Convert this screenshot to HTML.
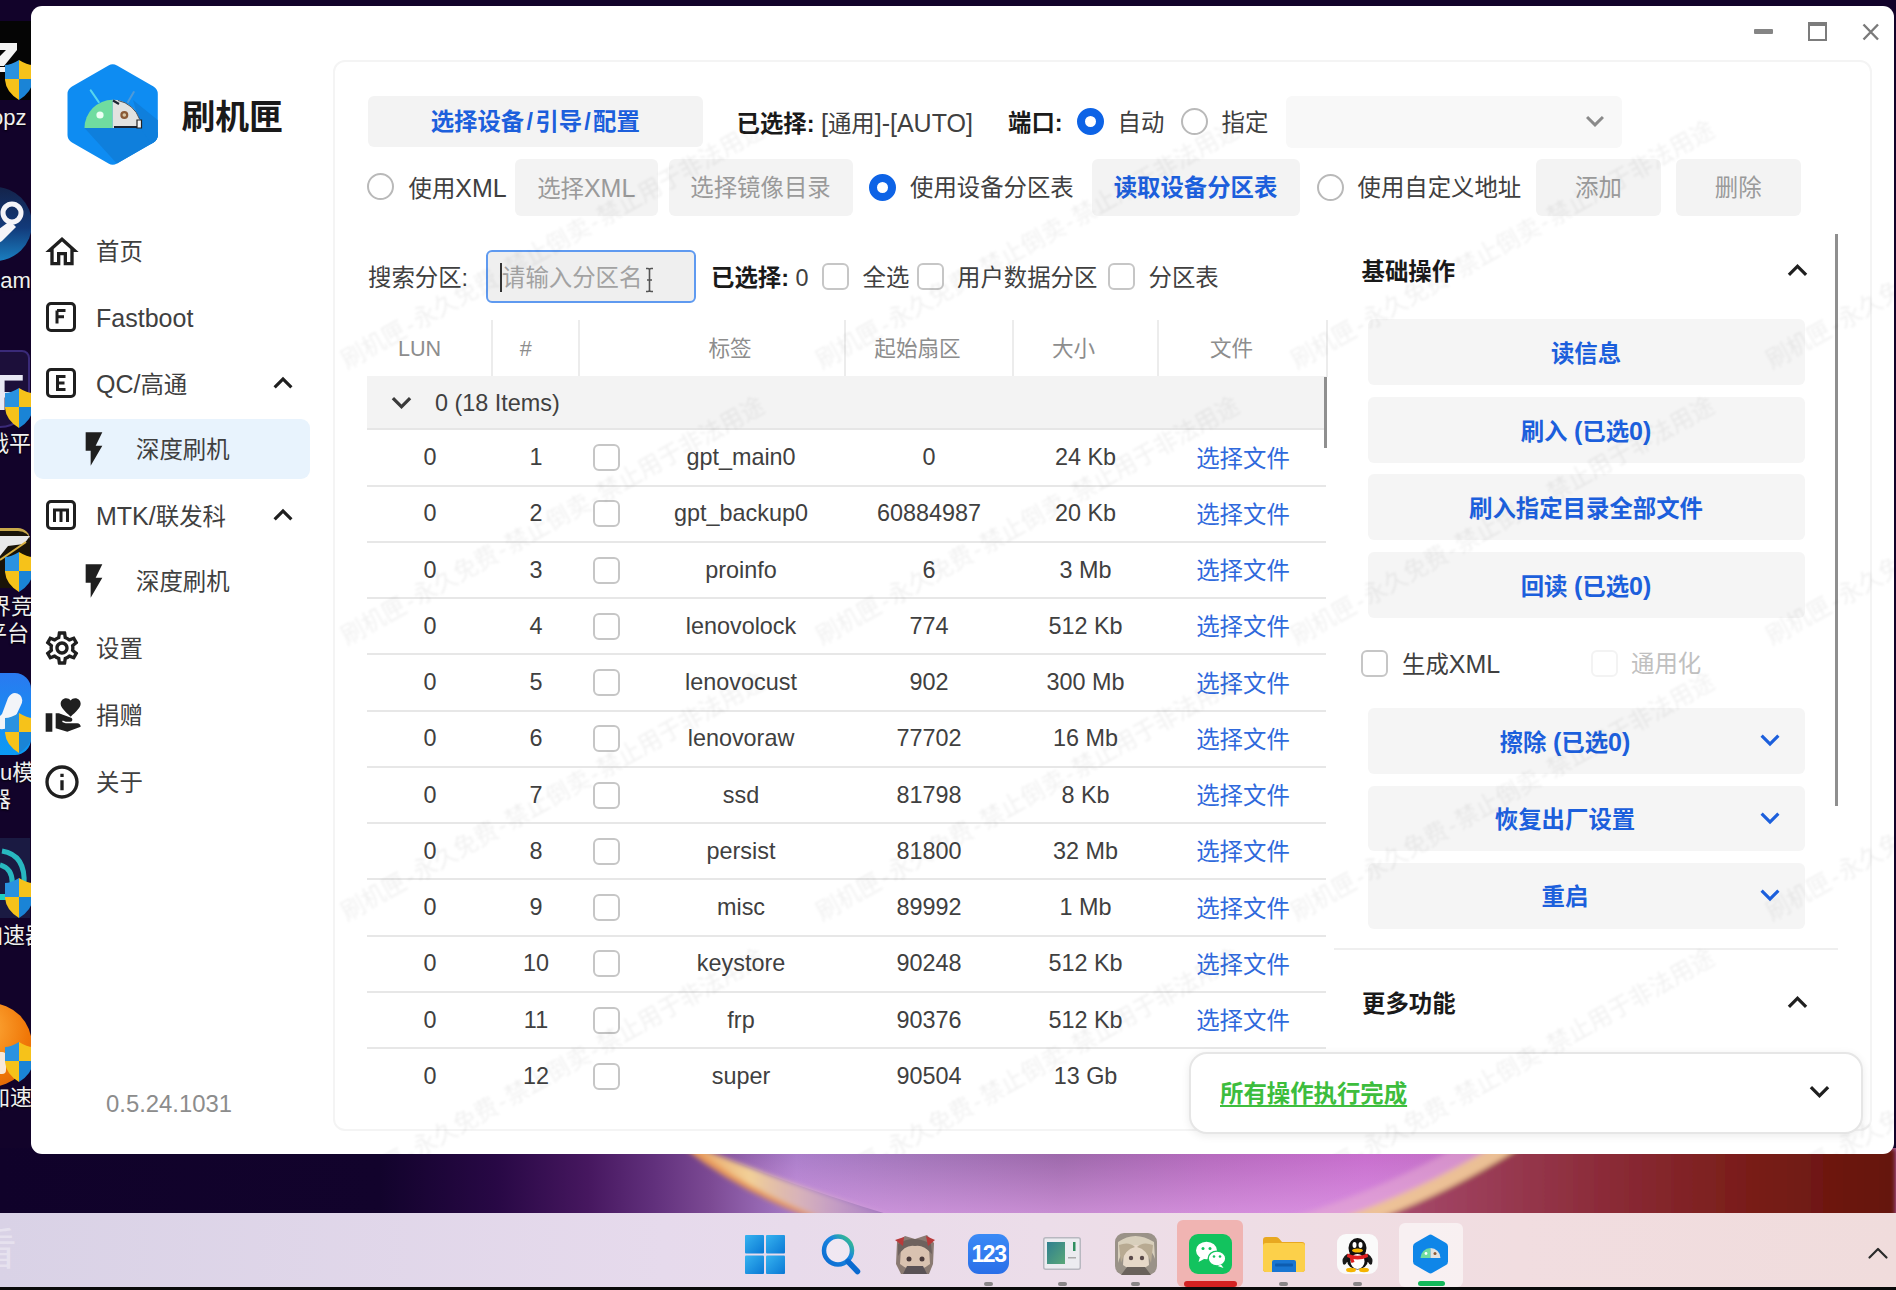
<!DOCTYPE html>
<html lang="zh-CN">
<head>
<meta charset="utf-8">
<title>刷机匣</title>
<style>
*{box-sizing:border-box;margin:0;padding:0}
html,body{width:1896px;height:1290px;overflow:hidden}
body{position:relative;font-family:"Liberation Sans","Noto Sans CJK SC",sans-serif;font-size:23.4px;color:#404040;background:#12032a}
.abs,.t,.tc,.b,.btn{position:absolute}
.t,.tc{white-space:nowrap;height:32px;line-height:32px;padding-top:1px}
.l{font-size:1.07em}
.sl{display:inline-block;width:11px;text-align:center}
.tc{text-align:center}
.b{font-weight:bold}
.btn{background:#f3f3f3;border-radius:6px;text-align:center;white-space:nowrap;padding-top:1.500px}
.blue{color:#1c5fdc}
.gray{color:#9a9a9a}
.dark{color:#1a1a1a}
/* desktop */
#wall{position:absolute;left:0;top:0;width:1896px;height:1290px;overflow:hidden}
#win{position:absolute;left:31px;top:6px;width:1863px;height:1148px;background:#fff;border-radius:11px;overflow:hidden}
#card{position:absolute;left:333px;top:60px;width:1539px;height:1071px;border:2px solid #f4f4f4;border-radius:12px}
.ck{position:absolute;width:27px;height:27px;border:2px solid #c6c6c6;border-radius:6px;background:#fff}
.rd{position:absolute;width:27px;height:27px;border:2px solid #b9b9b9;border-radius:50%;background:#fff}
.rd.on{border:8px solid #0d63e6}
.hl{position:absolute;height:2px;background:#e7e7e7;left:367px;width:959px}
.vl{position:absolute;width:2px;background:#ececec;top:320px;height:57px}
.row{position:absolute;left:0;width:1896px;height:0}
.row .t,.row .tc{top:-17px}
.row .ck{top:-13px;left:592.5px}
.lnk{color:#2f69dc}
#wm{position:absolute;left:31px;top:6px;width:1863px;height:1148px;overflow:hidden;border-radius:11px;pointer-events:none}
#wm i{display:inline-block;width:12px;text-align:center;font-style:normal}
#wm span{position:absolute;white-space:nowrap;font-size:23.400px;color:rgba(0,0,0,0.06);filter:blur(0.900px);transform-origin:0 50%;transform:rotate(-29.200deg);height:30px;line-height:30px}
#task{position:absolute;left:0;top:1213px;width:1896px;height:74px;background:linear-gradient(90deg,#d9d2e6 0%,#e6daec 35%,#ecdde9 55%,#f1dde0 80%,#f0dcdc 100%)}
</style>
</head>
<body>
<div id="wall">
<svg class="abs" style="left:0;top:1148px" width="1896" height="70" viewBox="0 1148 1896 70">
<defs>
<linearGradient id="wl" x1="0" y1="0" x2="1896" y2="0" gradientUnits="userSpaceOnUse">
<stop offset="0" stop-color="#10022a"/><stop offset="0.200" stop-color="#12032c"/><stop offset="0.262" stop-color="#280845"/><stop offset="0.310" stop-color="#46175f"/><stop offset="0.345" stop-color="#61307c"/><stop offset="0.375" stop-color="#7c4a94"/>
<stop offset="0.420" stop-color="#a87cc8"/><stop offset="0.480" stop-color="#a074b8"/><stop offset="0.560" stop-color="#9a66a8"/><stop offset="0.640" stop-color="#b468bc"/><stop offset="0.720" stop-color="#c66ccc"/><stop offset="0.800" stop-color="#c070c0"/><stop offset="1" stop-color="#c070c0"/>
</linearGradient>
<linearGradient id="wr" x1="1380" y1="0" x2="1896" y2="0" gradientUnits="userSpaceOnUse">
<stop offset="0" stop-color="#a84c70"/><stop offset="0.200" stop-color="#9a3c56"/><stop offset="0.450" stop-color="#8a2a36"/><stop offset="0.700" stop-color="#7a1e1a"/><stop offset="1" stop-color="#64140a"/>
</linearGradient>
<linearGradient id="wv" x1="0" y1="1150" x2="0" y2="1216" gradientUnits="userSpaceOnUse"><stop offset="0" stop-color="#e8a8f0" stop-opacity="0"/><stop offset="1" stop-color="#e8a8f0" stop-opacity="0.600"/></linearGradient>
<linearGradient id="wa" x1="0" y1="0" x2="1" y2="0"><stop offset="0" stop-color="#e8a060"/><stop offset="0.300" stop-color="#f2d098"/><stop offset="1" stop-color="#e8c8e8" stop-opacity="0"/></linearGradient>
<filter id="bl" x="-5%" y="-50%" width="110%" height="200%"><feGaussianBlur stdDeviation="2.500"/></filter>
</defs>
<rect x="0" y="1148" width="1896" height="70" fill="url(#wl)"/>
<path d="M700 1148 Q790 1185 900 1218 L1380 1218 L1520 1148Z" fill="url(#wv)"/>
<g filter="url(#bl)">
<path d="M686 1148 Q740 1190 814 1218 L900 1218 Q790 1185 700 1148Z" fill="url(#wa)"/>
<path d="M684 1148 Q740 1192 812 1218 L822 1218 Q748 1190 694 1148Z" fill="#e89858"/>
<path d="M1516 1148 L1896 1148 L1896 1218 L1376 1218 Q1450 1190 1516 1148Z" fill="url(#wr)"/>
<path d="M1490 1148 L1520 1148 Q1450 1192 1380 1218 L1340 1218 Q1420 1190 1490 1148Z" fill="#f0c890" opacity="0.900"/>
<path d="M1455 1148 L1492 1148 Q1420 1190 1342 1218 L1290 1218 Q1380 1190 1455 1148Z" fill="#e8b0d0" opacity="0.500"/>
</g>
</svg>
<div class="abs" style="left:0;top:21px;width:31px;height:79px;background:#050505"></div>
<svg class="abs" style="left:0;top:36px" width="31" height="40" viewBox="0 0 31 40"><path d="M-4 7 L17 7 L17 14 L4 30 L-4 30 L-4 24 L6 14 L-4 14Z M-4 31 h9 v5 h-9z" fill="#f4f4f4"/></svg>
<svg class="abs" style="left:5px;top:60px" width="28" height="40" viewBox="0 0 28 40"><defs><clipPath id="s1"><path d="M14 0 Q22 5 28 5 L28 20 Q27 32 14 40 Q1 32 0 20 L0 5 Q6 5 14 0Z"/></clipPath></defs><g clip-path="url(#s1)"><rect x="0" y="0" width="14" height="19" fill="#2a92e0"/><rect x="14" y="0" width="14" height="19" fill="#f6c21a"/><rect x="0" y="19" width="14" height="21" fill="#f6c21a"/><rect x="14" y="19" width="14" height="21" fill="#1a84d6"/></g></svg>
<div style="position:absolute;white-space:nowrap;color:#f0f0f0;font-size:22px;line-height:26px;height:26px;text-shadow:0 1px 2px #000;left:-9px;top:105px">opz</div>
<div class="abs" style="left:-42px;top:187px;width:74px;height:74px;border-radius:50%;background:linear-gradient(180deg,#14234a 0%,#123a7a 55%,#1a7fc0 100%)"></div>
<svg class="abs" style="left:0;top:195px" width="31" height="60" viewBox="0 0 31 60"><circle cx="12" cy="18" r="9" fill="none" stroke="#f4f4f8" stroke-width="5"/><path d="M-4 36 L10 26 L16 32 L2 46 L-4 50Z" fill="#f4f4f8"/></svg>
<div style="position:absolute;white-space:nowrap;color:#f0f0f0;font-size:22px;line-height:26px;height:26px;text-shadow:0 1px 2px #000;left:-18px;top:268px">team</div>
<div class="abs" style="left:-30px;top:350px;width:60px;height:78px;border-radius:8px 8px 30px 30px;background:#1c0f3a;border:2px solid #3a2a78"></div>
<div class="abs b" style="left:-6px;top:368px;font-size:50px;line-height:50px;color:#e8e8f4">F</div>
<svg class="abs" style="left:5px;top:388px" width="28" height="40" viewBox="0 0 28 40"><defs><clipPath id="s2"><path d="M14 0 Q22 5 28 5 L28 20 Q27 32 14 40 Q1 32 0 20 L0 5 Q6 5 14 0Z"/></clipPath></defs><g clip-path="url(#s2)"><rect x="0" y="0" width="14" height="19" fill="#2a92e0"/><rect x="14" y="0" width="14" height="19" fill="#f6c21a"/><rect x="0" y="19" width="14" height="21" fill="#f6c21a"/><rect x="14" y="19" width="14" height="21" fill="#1a84d6"/></g></svg>
<div style="position:absolute;white-space:nowrap;color:#f0f0f0;font-size:22px;line-height:26px;height:26px;text-shadow:0 1px 2px #000;left:-13px;top:431px">战平</div>
<div class="abs" style="left:-40px;top:528px;width:70px;height:60px;border-radius:12px;background:#1a1408;border-top:3px solid #c8a84a"></div>
<svg class="abs" style="left:0;top:534px" width="31" height="30" viewBox="0 0 31 30"><path d="M0 2 L30 2 L24 10 L8 12 L0 22Z" fill="#e8e8e8"/><path d="M0 26 L26 8" stroke="#d8b040" stroke-width="2"/></svg>
<svg class="abs" style="left:5px;top:552px" width="28" height="40" viewBox="0 0 28 40"><defs><clipPath id="s3"><path d="M14 0 Q22 5 28 5 L28 20 Q27 32 14 40 Q1 32 0 20 L0 5 Q6 5 14 0Z"/></clipPath></defs><g clip-path="url(#s3)"><rect x="0" y="0" width="14" height="19" fill="#2a92e0"/><rect x="14" y="0" width="14" height="19" fill="#f6c21a"/><rect x="0" y="19" width="14" height="21" fill="#f6c21a"/><rect x="14" y="19" width="14" height="21" fill="#1a84d6"/></g></svg>
<div style="position:absolute;white-space:nowrap;color:#f0f0f0;font-size:22px;line-height:26px;height:26px;text-shadow:0 1px 2px #000;left:-11px;top:594px">界竞</div>
<div style="position:absolute;white-space:nowrap;color:#f0f0f0;font-size:22px;line-height:26px;height:26px;text-shadow:0 1px 2px #000;left:-15px;top:621px">平台</div>
<div class="abs" style="left:-50px;top:673px;width:81px;height:82px;border-radius:16px;background:linear-gradient(180deg,#2a7af0,#0a9af4)"></div>
<svg class="abs" style="left:0;top:690px" width="31" height="50" viewBox="0 0 31 50"><path d="M2 24 L8 8 Q13 0 20 5 Q24 9 21 15 L13 32 Q7 42 -4 38 L-4 30Z" fill="#f2f4f8"/></svg>
<svg class="abs" style="left:5px;top:713px" width="28" height="40" viewBox="0 0 28 40"><defs><clipPath id="s4"><path d="M14 0 Q22 5 28 5 L28 20 Q27 32 14 40 Q1 32 0 20 L0 5 Q6 5 14 0Z"/></clipPath></defs><g clip-path="url(#s4)"><rect x="0" y="0" width="14" height="19" fill="#2a92e0"/><rect x="14" y="0" width="14" height="19" fill="#f6c21a"/><rect x="0" y="19" width="14" height="21" fill="#f6c21a"/><rect x="14" y="19" width="14" height="21" fill="#1a84d6"/></g></svg>
<div style="position:absolute;white-space:nowrap;color:#f0f0f0;font-size:22px;line-height:26px;height:26px;text-shadow:0 1px 2px #000;left:0px;top:760px">u模</div>
<div style="position:absolute;white-space:nowrap;color:#f0f0f0;font-size:22px;line-height:26px;height:26px;text-shadow:0 1px 2px #000;left:-11px;top:787px">器</div>
<div class="abs" style="left:-40px;top:838px;width:70px;height:80px;background:#1a1a42"></div>
<svg class="abs" style="left:0;top:845px" width="31" height="70" viewBox="0 0 31 70"><path d="M2 6 Q26 10 24 40" fill="none" stroke="#28b8c0" stroke-width="5"/><path d="M0 20 Q14 24 12 42" fill="none" stroke="#28b8c0" stroke-width="5"/><path d="M0 52 h6" stroke="#20d0c0" stroke-width="6"/></svg>
<svg class="abs" style="left:5px;top:878px" width="28" height="40" viewBox="0 0 28 40"><defs><clipPath id="s5"><path d="M14 0 Q22 5 28 5 L28 20 Q27 32 14 40 Q1 32 0 20 L0 5 Q6 5 14 0Z"/></clipPath></defs><g clip-path="url(#s5)"><rect x="0" y="0" width="14" height="19" fill="#2a92e0"/><rect x="14" y="0" width="14" height="19" fill="#f6c21a"/><rect x="0" y="19" width="14" height="21" fill="#f6c21a"/><rect x="14" y="19" width="14" height="21" fill="#1a84d6"/></g></svg>
<div style="position:absolute;white-space:nowrap;color:#f0f0f0;font-size:22px;line-height:26px;height:26px;text-shadow:0 1px 2px #000;left:-19px;top:923px">加速器</div>
<div class="abs" style="left:-52px;top:1003px;width:84px;height:84px;border-radius:50%;background:radial-gradient(circle at 40% 30%,#ffb040,#f07808 60%,#d85c04)"></div>
<div class="abs" style="left:-20px;top:1052px;width:26px;height:22px;background:#f8e8d8;border-radius:4px"></div>
<svg class="abs" style="left:5px;top:1042px" width="28" height="40" viewBox="0 0 28 40"><defs><clipPath id="s6"><path d="M14 0 Q22 5 28 5 L28 20 Q27 32 14 40 Q1 32 0 20 L0 5 Q6 5 14 0Z"/></clipPath></defs><g clip-path="url(#s6)"><rect x="0" y="0" width="14" height="19" fill="#2a92e0"/><rect x="14" y="0" width="14" height="19" fill="#f6c21a"/><rect x="0" y="19" width="14" height="21" fill="#f6c21a"/><rect x="14" y="19" width="14" height="21" fill="#1a84d6"/></g></svg>
<div style="position:absolute;white-space:nowrap;color:#f0f0f0;font-size:22px;line-height:26px;height:26px;text-shadow:0 1px 2px #000;left:-12px;top:1085px">加速</div>
</div>
<div id="win"></div>
<div id="card"></div>
<div id="ui">
<div class="abs" style="left:1754px;top:28.500px;width:19px;height:5px;background:#858585;border-radius:1px"></div>
<div class="abs" style="left:1808px;top:22px;width:18.500px;height:18.500px;border:2.500px solid #7c7c7c;border-top-width:4.500px"></div>
<svg class="abs" style="left:1861px;top:22px" width="20" height="20" viewBox="0 0 20 20"><path d="M2.500 2.500L17 17.500M17 2.500L2.500 17.500" stroke="#7a7a7a" stroke-width="2.400" fill="none"/></svg>
<svg class="abs" style="left:62px;top:58px" width="102" height="112" viewBox="62 58 102 112">
<defs><clipPath id="hexc"><path id="hexp" d="M108.500 65.500 Q112.700 63 117 65.500 L153.500 86.500 Q157.800 89 157.800 94 L157.800 135 Q157.800 140 153.500 142.500 L117 163.500 Q112.700 166 108.500 163.500 L72 142.500 Q67.500 140 67.500 135 L67.500 94 Q67.500 89 72 86.500 Z"/></clipPath></defs>
<use href="#hexp" fill="#0e8cf2"/>
<g clip-path="url(#hexc)"><path d="M84.500 128 L141 128 L141 118 L190 160 L150 200 Z" fill="#0f7fdc"/><path d="M133 100 L170 130 L160 160 L141 128Z" fill="#0f7fdc"/></g>
<path d="M90.800 90.500 L98.700 102" stroke="#56d6ee" stroke-width="2.200" stroke-linecap="round"/>
<path d="M133.800 92 L128 102" stroke="#4f9ad8" stroke-width="2" stroke-linecap="round"/>
<path d="M84.500 128 A28.200 28.200 0 0 1 112.700 99.800 L112.700 128 Z" fill="#70dca0"/>
<path d="M112.700 99.800 A28.200 28.200 0 0 1 139.500 119 L141 128 L112.700 128 Z" fill="#e2e2e0"/>
<path d="M113 100.500 l6 3.500 M114 127 h26" stroke="#1c2430" stroke-width="2.200"/><path d="M118 100.500 A28.200 28.200 0 0 1 139.500 119" stroke="#3a4450" stroke-width="0.900" fill="none"/>
<path d="M137 120 h4.500 v8 h-4.500z" fill="#f4f4f4" stroke="#222" stroke-width="1.200"/>
<circle cx="100" cy="115" r="3.600" fill="#ecfff4"/>
<circle cx="124.300" cy="115" r="4" fill="#8a5a36"/><circle cx="124.300" cy="115" r="1.800" fill="#d8c8a8"/>
</svg>
<div class="t b dark" style="left:181.500px;top:91.500px;height:48px;line-height:48px;font-size:33.800px">刷机匣</div>
<div class="abs" style="left:34px;top:419px;width:276px;height:60px;background:#e8f3fd;border-radius:9px"></div>
<svg class="abs" style="left:42.0px;top:231.8px" width="40" height="40" viewBox="0 0 24 24"><path fill="#1f1f1f" d="M12 5.69l5 4.5V18h-2v-6H9v6H7v-7.81l5-4.5M12 3L2 12h3v8h6v-6h2v6h6v-8h3L12 3z"/></svg>
<div class="t" style="left:96px;top:235px;">首页</div>
<svg class="abs" style="left:46px;top:302px" width="30" height="30" viewBox="0 0 30 30"><rect x="1.500" y="1.500" width="27" height="27" rx="3.500" fill="none" stroke="#1f1f1f" stroke-width="3"/><path d="M11 8.500h8.500M11 8.500v13M11 14.800h7" fill="none" stroke="#1f1f1f" stroke-width="3"/></svg>
<div class="t" style="left:96px;top:301px;"><span class="l">Fastboot</span></div>
<svg class="abs" style="left:46px;top:368px" width="30" height="30" viewBox="0 0 30 30"><rect x="1.500" y="1.500" width="27" height="27" rx="3.500" fill="none" stroke="#1f1f1f" stroke-width="3"/><path d="M19.500 8.500h-8v13h8M11.500 15h7" fill="none" stroke="#1f1f1f" stroke-width="3"/></svg>
<div class="t" style="left:96px;top:367px;"><span class="l">QC/</span>高通</div>
<svg class="abs" style="left:74.0px;top:429.0px" width="40" height="40" viewBox="0 0 24 24"><path fill="#1f1f1f" d="M7 2v11h3v9l7-12h-4l4-8z"/></svg>
<div class="t" style="left:136px;top:433px;">深度刷机</div>
<svg class="abs" style="left:46px;top:500px" width="30" height="30" viewBox="0 0 30 30"><rect x="1.500" y="1.500" width="27" height="27" rx="3.500" fill="none" stroke="#1f1f1f" stroke-width="3"/><path d="M8.500 22v-12h13v12M15 10v12" fill="none" stroke="#1f1f1f" stroke-width="3"/></svg>
<div class="t" style="left:96px;top:499px;"><span class="l">MTK/</span>联发科</div>
<svg class="abs" style="left:74.0px;top:561.0px" width="40" height="40" viewBox="0 0 24 24"><path fill="#1f1f1f" d="M7 2v11h3v9l7-12h-4l4-8z"/></svg>
<div class="t" style="left:136px;top:565px;">深度刷机</div>
<svg class="abs" style="left:42.0px;top:628.0px" width="40" height="40" viewBox="0 0 24 24"><path fill="#1f1f1f" d="M19.43 12.98c.04-.32.07-.64.07-.98 0-.34-.03-.66-.07-.98l2.11-1.65c.19-.15.24-.42.12-.64l-2-3.46c-.09-.16-.26-.25-.44-.25-.06 0-.12.01-.17.03l-2.49 1c-.52-.4-1.08-.73-1.69-.98l-.38-2.65C14.46 2.18 14.25 2 14 2h-4c-.25 0-.46.18-.49.42l-.38 2.65c-.61.25-1.17.59-1.69.98l-2.49-1c-.06-.02-.12-.03-.18-.03-.17 0-.34.09-.43.25l-2 3.46c-.13.22-.07.49.12.64l2.11 1.65c-.04.32-.07.65-.07.98 0 .33.03.66.07.98l-2.11 1.65c-.19.15-.24.42-.12.64l2 3.46c.09.16.26.25.44.25.06 0 .12-.01.17-.03l2.49-1c.52.4 1.08.73 1.69.98l.38 2.65c.03.24.24.42.49.42h4c.25 0 .46-.18.49-.42l.38-2.65c.61-.25 1.17-.59 1.69-.98l2.49 1c.06.02.12.03.18.03.17 0 .34-.09.43-.25l2-3.46c.12-.22.07-.49-.12-.64l-2.11-1.65zm-1.98-1.71c.04.31.05.52.05.73 0 .21-.02.43-.05.73l-.14 1.13.89.7 1.08.84-.7 1.21-1.27-.51-1.04-.42-.9.68c-.43.32-.84.56-1.25.73l-1.06.43-.16 1.13-.2 1.35h-1.4l-.19-1.35-.16-1.13-1.06-.43c-.43-.18-.83-.41-1.23-.71l-.91-.7-1.06.43-1.27.51-.7-1.21 1.08-.84.89-.7-.14-1.13c-.03-.31-.05-.54-.05-.74s.02-.43.05-.73l.14-1.13-.89-.7-1.08-.84.7-1.21 1.27.51 1.04.42.9-.68c.43-.32.84-.56 1.25-.73l1.06-.43.16-1.13.2-1.35h1.39l.19 1.35.16 1.13 1.06.43c.43.18.83.41 1.23.71l.91.7 1.06-.43 1.27-.51.7 1.21-1.07.85-.89.7.14 1.13zM12 8c-2.21 0-4 1.79-4 4s1.79 4 4 4 4-1.79 4-4-1.79-4-4-4zm0 6c-1.1 0-2-.9-2-2s.9-2 2-2 2 .9 2 2-.9 2-2 2z"/></svg>
<div class="t" style="left:96px;top:632px;">设置</div>
<svg class="abs" style="left:43.5px;top:695.0px" width="40" height="40" viewBox="0 0 24 24"><path fill="#1f1f1f" d="M1 11h4v11H1zM16 3.250C16.650 2.490 17.660 2 18.700 2 20.550 2 22 3.450 22 5.300c0 2.270-2.910 4.900-6 7.700-3.090-2.810-6-5.440-6-7.700C10 3.450 11.450 2 13.300 2c1.040 0 2.050.49 2.700 1.250zM20 17h-7l-2.090-.73.330-.94L13 16h2.820c.65 0 1.180-.53 1.180-1.180 0-.49-.31-.93-.77-1.110L8.970 11H7v9.020L14 22l8.010-3c-.01-1.100-.9-2-2.010-2z"/></svg>
<div class="t" style="left:96px;top:699px;">捐赠</div>
<svg class="abs" style="left:42.0px;top:761.5px" width="40" height="40" viewBox="0 0 24 24"><path fill="#1f1f1f" d="M11 7h2v2h-2zm0 4h2v6h-2zm1-9C6.48 2 2 6.48 2 12s4.48 10 10 10 10-4.480 10-10S17.520 2 12 2zm0 18c-4.410 0-8-3.590-8-8s3.590-8 8-8 8 3.590 8 8-3.590 8-8 8z"/></svg>
<div class="t" style="left:96px;top:765.5px;">关于</div>
<svg class="abs" style="left:264.0px;top:364.0px" width="38" height="38" viewBox="0 0 24 24"><path fill="#1f1f1f" d="M12 8l-6 6 1.410 1.410L12 10.830l4.590 4.580L18 14z"/></svg>
<svg class="abs" style="left:264.0px;top:496.0px" width="38" height="38" viewBox="0 0 24 24"><path fill="#1f1f1f" d="M12 8l-6 6 1.410 1.410L12 10.830l4.590 4.580L18 14z"/></svg>
<div class="t" style="left:106px;top:1087px;color:#8c8c8c"><span style="font-size:1.020em">0.5.24.1031</span></div>
<div class="btn b blue" style="left:368px;top:95.5px;width:334.5px;height:51.5px;line-height:51.5px;">选择设备<span class="sl">/</span>引导<span class="sl">/</span>配置</div>
<div class="t" style="left:736.500px;top:106px;"><b class="dark">已选择:</b> <span class="l">[</span>通用<span class="l">]-[AUTO]</span></div>
<div class="t" style="left:1008px;top:106px;"><b class="dark">端口:</b></div>
<div class="rd on" style="left:1077.1px;top:108.0px"></div>
<div class="t" style="left:1117.500px;top:106px;">自动</div>
<div class="rd" style="left:1180.8px;top:108.0px"></div>
<div class="t" style="left:1221.5px;top:106px;">指定</div>
<div class="abs" style="left:1286px;top:96px;width:336px;height:52px;background:#f8f8f8;border-radius:6px"></div>
<svg class="abs" style="left:1576.6px;top:103.0px" width="36" height="36" viewBox="0 0 24 24"><path fill="#8a8a8a" d="M16.590 8.590L12 13.170 7.410 8.590 6 10l6 6 6-6z"/></svg>
<div class="rd" style="left:367.0px;top:173.3px"></div>
<div class="t" style="left:408.5px;top:171px;">使用<span class="l">XML</span></div>
<div class="btn gray" style="left:514.5px;top:158.5px;width:143.5px;height:57.0px;line-height:57.0px;">选择<span class="l">XML</span></div>
<div class="btn gray" style="left:668.5px;top:158.5px;width:184.0px;height:57.0px;line-height:57.0px;">选择镜像目录</div>
<div class="rd on" style="left:869.0px;top:173.5px"></div>
<div class="t" style="left:910px;top:171px;">使用设备分区表</div>
<div class="btn b blue" style="left:1091.5px;top:158.5px;width:208.0px;height:57.0px;line-height:57.0px;">读取设备分区表</div>
<div class="rd" style="left:1316.5px;top:173.5px"></div>
<div class="t" style="left:1357.5px;top:171px;">使用自定义地址</div>
<div class="btn gray" style="left:1536px;top:158.5px;width:125px;height:57.0px;line-height:57.0px;">添加</div>
<div class="btn gray" style="left:1675.5px;top:158.5px;width:125.5px;height:57.0px;line-height:57.0px;">删除</div>
<div class="t" style="left:368px;top:261px;">搜索分区:</div>
<div class="abs" style="left:485.500px;top:249.500px;width:210.500px;height:53.500px;background:#efefef;border:2px solid #5f9af0;border-radius:6px"></div>
<div class="abs" style="left:500px;top:263px;width:2px;height:29px;background:#333"></div>
<div class="t" style="left:502px;top:261px;color:#a2a2a2">请输入分区名</div>
<svg class="abs" style="left:640px;top:265px" width="18" height="30" viewBox="0 0 18 30"><path d="M6 3.500h2q1.500 0 1.500 1.500v20q0 1.500-1.500 1.500h-2M13 3.500h-2q-1.500 0-1.500 1.500M13 26.500h-2q-1.500 0-1.500-1.500M7 15h5" stroke="#555" stroke-width="1.600" fill="none"/></svg>
<div class="t" style="left:711px;top:261px;"><b class="dark">已选择:</b> 0</div>
<div class="ck" style="left:822px;top:263px;"></div>
<div class="t" style="left:862.5px;top:261px;">全选</div>
<div class="ck" style="left:917px;top:263px;"></div>
<div class="t" style="left:957px;top:261px;">用户数据分区</div>
<div class="ck" style="left:1107.5px;top:263px;"></div>
<div class="t" style="left:1148.5px;top:261px;">分区表</div>
<div class="vl" style="left:491px"></div>
<div class="vl" style="left:577.5px"></div>
<div class="vl" style="left:844px"></div>
<div class="vl" style="left:1012px"></div>
<div class="vl" style="left:1156.5px"></div>
<div class="vl" style="left:1325.5px"></div>
<div class="t" style="left:398px;top:331.5px;font-size:21.600px;color:#8d8d8d">LUN</div>
<div class="tc" style="left:375.70000000000005px;width:300px;top:331.5px;font-size:21.600px;color:#8d8d8d">#</div>
<div class="tc" style="left:580.0px;width:300px;top:331.5px;font-size:21.600px;color:#8d8d8d">标签</div>
<div class="tc" style="left:767.5px;width:300px;top:331.5px;font-size:21.600px;color:#8d8d8d">起始扇区</div>
<div class="tc" style="left:923.5px;width:300px;top:331.5px;font-size:21.600px;color:#8d8d8d">大小</div>
<div class="tc" style="left:1081.5px;width:300px;top:331.5px;font-size:21.600px;color:#8d8d8d">文件</div>
<div class="abs" style="left:367px;top:375.500px;width:959px;height:54.500px;background:#f3f3f3;border-bottom:2px solid #e6e6e6"></div>
<svg class="abs" style="left:381.5px;top:382.5px" width="39" height="39" viewBox="0 0 24 24"><path fill="#3a3a3a" d="M16.590 8.590L12 13.170 7.410 8.590 6 10l6 6 6-6z"/></svg>
<div class="t" style="left:435px;top:386px;">0 (18 Items)</div>
<div class="abs" style="left:1323.500px;top:376.500px;width:3px;height:71px;background:#8f8f8f"></div>
<div class="row" style="top:457.0px"><div class="tc" style="left:380px;width:100px">0</div><div class="tc" style="left:486px;width:100px">1</div><div class="ck"></div><div class="tc" style="left:591px;width:300px">gpt_main0</div><div class="tc" style="left:829px;width:200px">0</div><div class="tc" style="left:985.500px;width:200px">24 Kb</div><div class="tc lnk" style="left:1193px;width:100px;top:-15.500px">选择文件</div></div>
<div class="hl" style="top:484.5px"></div>
<div class="row" style="top:513.25px"><div class="tc" style="left:380px;width:100px">0</div><div class="tc" style="left:486px;width:100px">2</div><div class="ck"></div><div class="tc" style="left:591px;width:300px">gpt_backup0</div><div class="tc" style="left:829px;width:200px">60884987</div><div class="tc" style="left:985.500px;width:200px">20 Kb</div><div class="tc lnk" style="left:1193px;width:100px;top:-15.500px">选择文件</div></div>
<div class="hl" style="top:540.75px"></div>
<div class="row" style="top:569.5px"><div class="tc" style="left:380px;width:100px">0</div><div class="tc" style="left:486px;width:100px">3</div><div class="ck"></div><div class="tc" style="left:591px;width:300px">proinfo</div><div class="tc" style="left:829px;width:200px">6</div><div class="tc" style="left:985.500px;width:200px">3 Mb</div><div class="tc lnk" style="left:1193px;width:100px;top:-15.500px">选择文件</div></div>
<div class="hl" style="top:597.0px"></div>
<div class="row" style="top:625.75px"><div class="tc" style="left:380px;width:100px">0</div><div class="tc" style="left:486px;width:100px">4</div><div class="ck"></div><div class="tc" style="left:591px;width:300px">lenovolock</div><div class="tc" style="left:829px;width:200px">774</div><div class="tc" style="left:985.500px;width:200px">512 Kb</div><div class="tc lnk" style="left:1193px;width:100px;top:-15.500px">选择文件</div></div>
<div class="hl" style="top:653.25px"></div>
<div class="row" style="top:682.0px"><div class="tc" style="left:380px;width:100px">0</div><div class="tc" style="left:486px;width:100px">5</div><div class="ck"></div><div class="tc" style="left:591px;width:300px">lenovocust</div><div class="tc" style="left:829px;width:200px">902</div><div class="tc" style="left:985.500px;width:200px">300 Mb</div><div class="tc lnk" style="left:1193px;width:100px;top:-15.500px">选择文件</div></div>
<div class="hl" style="top:709.5px"></div>
<div class="row" style="top:738.25px"><div class="tc" style="left:380px;width:100px">0</div><div class="tc" style="left:486px;width:100px">6</div><div class="ck"></div><div class="tc" style="left:591px;width:300px">lenovoraw</div><div class="tc" style="left:829px;width:200px">77702</div><div class="tc" style="left:985.500px;width:200px">16 Mb</div><div class="tc lnk" style="left:1193px;width:100px;top:-15.500px">选择文件</div></div>
<div class="hl" style="top:765.75px"></div>
<div class="row" style="top:794.5px"><div class="tc" style="left:380px;width:100px">0</div><div class="tc" style="left:486px;width:100px">7</div><div class="ck"></div><div class="tc" style="left:591px;width:300px">ssd</div><div class="tc" style="left:829px;width:200px">81798</div><div class="tc" style="left:985.500px;width:200px">8 Kb</div><div class="tc lnk" style="left:1193px;width:100px;top:-15.500px">选择文件</div></div>
<div class="hl" style="top:822.0px"></div>
<div class="row" style="top:850.75px"><div class="tc" style="left:380px;width:100px">0</div><div class="tc" style="left:486px;width:100px">8</div><div class="ck"></div><div class="tc" style="left:591px;width:300px">persist</div><div class="tc" style="left:829px;width:200px">81800</div><div class="tc" style="left:985.500px;width:200px">32 Mb</div><div class="tc lnk" style="left:1193px;width:100px;top:-15.500px">选择文件</div></div>
<div class="hl" style="top:878.25px"></div>
<div class="row" style="top:907.0px"><div class="tc" style="left:380px;width:100px">0</div><div class="tc" style="left:486px;width:100px">9</div><div class="ck"></div><div class="tc" style="left:591px;width:300px">misc</div><div class="tc" style="left:829px;width:200px">89992</div><div class="tc" style="left:985.500px;width:200px">1 Mb</div><div class="tc lnk" style="left:1193px;width:100px;top:-15.500px">选择文件</div></div>
<div class="hl" style="top:934.5px"></div>
<div class="row" style="top:963.25px"><div class="tc" style="left:380px;width:100px">0</div><div class="tc" style="left:486px;width:100px">10</div><div class="ck"></div><div class="tc" style="left:591px;width:300px">keystore</div><div class="tc" style="left:829px;width:200px">90248</div><div class="tc" style="left:985.500px;width:200px">512 Kb</div><div class="tc lnk" style="left:1193px;width:100px;top:-15.500px">选择文件</div></div>
<div class="hl" style="top:990.75px"></div>
<div class="row" style="top:1019.5px"><div class="tc" style="left:380px;width:100px">0</div><div class="tc" style="left:486px;width:100px">11</div><div class="ck"></div><div class="tc" style="left:591px;width:300px">frp</div><div class="tc" style="left:829px;width:200px">90376</div><div class="tc" style="left:985.500px;width:200px">512 Kb</div><div class="tc lnk" style="left:1193px;width:100px;top:-15.500px">选择文件</div></div>
<div class="hl" style="top:1047.0px"></div>
<div class="row" style="top:1075.75px"><div class="tc" style="left:380px;width:100px">0</div><div class="tc" style="left:486px;width:100px">12</div><div class="ck"></div><div class="tc" style="left:591px;width:300px">super</div><div class="tc" style="left:829px;width:200px">90504</div><div class="tc" style="left:985.500px;width:200px">13 Gb</div></div>
<div class="t" style="left:1361.5px;top:255px;"><b class="dark">基础操作</b></div>
<svg class="abs" style="left:1778.0px;top:251.0px" width="39" height="39" viewBox="0 0 24 24"><path fill="#1f1f1f" d="M12 8l-6 6 1.410 1.410L12 10.830l4.590 4.580L18 14z"/></svg>
<div class="abs" style="left:1834.500px;top:234px;width:3px;height:572px;background:#8f8f8f"></div>
<div class="btn b blue" style="left:1367.5px;top:319.0px;width:437.0px;height:66.0px;line-height:66.0px;background:#f5f5f5">读信息</div>
<div class="btn b blue" style="left:1367.5px;top:396.5px;width:437.0px;height:66.0px;line-height:66.0px;background:#f5f5f5">刷入 <span class="l">(</span>已选<span class="l">0)</span></div>
<div class="btn b blue" style="left:1367.5px;top:474.0px;width:437.0px;height:66.0px;line-height:66.0px;background:#f5f5f5">刷入指定目录全部文件</div>
<div class="btn b blue" style="left:1367.5px;top:551.5px;width:437.0px;height:66.0px;line-height:66.0px;background:#f5f5f5">回读 <span class="l">(</span>已选<span class="l">0)</span></div>
<div class="ck" style="left:1361px;top:649.5px;"></div>
<div class="t" style="left:1402px;top:647px;">生成<span class="l">XML</span></div>
<div class="ck" style="left:1590.5px;top:649.5px;border-color:#f3f3f3"></div>
<div class="t" style="left:1631px;top:647px;color:#c0c0c0">通用化</div>
<div class="btn " style="left:1368px;top:708.0px;width:436.5px;height:65.5px;line-height:65.5px;background:#f5f5f5"></div>
<div class="tc b blue" style="left:1415.0px;width:300px;top:725.0px;">擦除 <span class="l">(</span>已选<span class="l">0)</span></div>
<svg class="abs" style="left:1751.3px;top:721.0px" width="38" height="38" viewBox="0 0 24 24"><path fill="#1c5fdc" d="M16.590 8.590L12 13.170 7.410 8.590 6 10l6 6 6-6z"/></svg>
<div class="btn " style="left:1368px;top:785.7px;width:436.5px;height:65.5px;line-height:65.5px;background:#f5f5f5"></div>
<div class="tc b blue" style="left:1415.0px;width:300px;top:802.7px;">恢复出厂设置</div>
<svg class="abs" style="left:1751.3px;top:798.7px" width="38" height="38" viewBox="0 0 24 24"><path fill="#1c5fdc" d="M16.590 8.590L12 13.170 7.410 8.590 6 10l6 6 6-6z"/></svg>
<div class="btn " style="left:1368px;top:863.4px;width:436.5px;height:65.5px;line-height:65.5px;background:#f5f5f5"></div>
<div class="tc b blue" style="left:1415.0px;width:300px;top:880.4px;">重启</div>
<svg class="abs" style="left:1751.3px;top:876.4px" width="38" height="38" viewBox="0 0 24 24"><path fill="#1c5fdc" d="M16.590 8.590L12 13.170 7.410 8.590 6 10l6 6 6-6z"/></svg>
<div class="abs" style="left:1334px;top:947.500px;width:504px;height:2px;background:#efefef"></div>
<div class="t" style="left:1362px;top:987px;"><b class="dark">更多功能</b></div>
<svg class="abs" style="left:1778.0px;top:982.5px" width="39" height="39" viewBox="0 0 24 24"><path fill="#1f1f1f" d="M12 8l-6 6 1.410 1.410L12 10.830l4.590 4.580L18 14z"/></svg>
<div class="abs" style="left:1189px;top:1052px;width:674px;height:82px;background:#fff;border:2px solid #e6e6e6;border-radius:18px;box-shadow:0 2px 8px rgba(0,0,0,0.08)"></div>
<div class="t" style="left:1220px;top:1076.5px;"><b style="color:#3dbd3d;text-decoration:underline;text-decoration-thickness:2px;text-underline-offset:3px">所有操作执行完成</b></div>
<svg class="abs" style="left:1800.3px;top:1072.0px" width="39" height="39" viewBox="0 0 24 24"><path fill="#1f1f1f" d="M16.590 8.590L12 13.170 7.410 8.590 6 10l6 6 6-6z"/></svg>
<!--MAIN2-->
</div>
<div id="wm">
<span style="left:312px;top:341px">刷机匣<i>-</i>永久免费<i>-</i>禁止倒卖<i>-</i>禁止用于非法用途</span>
<span style="left:787px;top:341px">刷机匣<i>-</i>永久免费<i>-</i>禁止倒卖<i>-</i>禁止用于非法用途</span>
<span style="left:1262px;top:341px">刷机匣<i>-</i>永久免费<i>-</i>禁止倒卖<i>-</i>禁止用于非法用途</span>
<span style="left:1737px;top:341px">刷机匣<i>-</i>永久免费<i>-</i>禁止倒卖<i>-</i>禁止用于非法用途</span>
<span style="left:312px;top:617px">刷机匣<i>-</i>永久免费<i>-</i>禁止倒卖<i>-</i>禁止用于非法用途</span>
<span style="left:787px;top:617px">刷机匣<i>-</i>永久免费<i>-</i>禁止倒卖<i>-</i>禁止用于非法用途</span>
<span style="left:1262px;top:617px">刷机匣<i>-</i>永久免费<i>-</i>禁止倒卖<i>-</i>禁止用于非法用途</span>
<span style="left:1737px;top:617px">刷机匣<i>-</i>永久免费<i>-</i>禁止倒卖<i>-</i>禁止用于非法用途</span>
<span style="left:312px;top:893px">刷机匣<i>-</i>永久免费<i>-</i>禁止倒卖<i>-</i>禁止用于非法用途</span>
<span style="left:787px;top:893px">刷机匣<i>-</i>永久免费<i>-</i>禁止倒卖<i>-</i>禁止用于非法用途</span>
<span style="left:1262px;top:893px">刷机匣<i>-</i>永久免费<i>-</i>禁止倒卖<i>-</i>禁止用于非法用途</span>
<span style="left:1737px;top:893px">刷机匣<i>-</i>永久免费<i>-</i>禁止倒卖<i>-</i>禁止用于非法用途</span>
<span style="left:312px;top:1169px">刷机匣<i>-</i>永久免费<i>-</i>禁止倒卖<i>-</i>禁止用于非法用途</span>
<span style="left:787px;top:1169px">刷机匣<i>-</i>永久免费<i>-</i>禁止倒卖<i>-</i>禁止用于非法用途</span>
<span style="left:1262px;top:1169px">刷机匣<i>-</i>永久免费<i>-</i>禁止倒卖<i>-</i>禁止用于非法用途</span>
<span style="left:1737px;top:1169px">刷机匣<i>-</i>永久免费<i>-</i>禁止倒卖<i>-</i>禁止用于非法用途</span>
</div>
<div id="task">
<svg class="abs" style="left:745px;top:22px" width="40" height="39" viewBox="0 0 40 39"><defs><linearGradient id="wg" x1="0" y1="0" x2="1" y2="1"><stop offset="0" stop-color="#36b3f0"/><stop offset="1" stop-color="#0a78d4"/></linearGradient></defs><rect x="0" y="0" width="19" height="18.500" rx="1" fill="url(#wg)"/><rect x="21" y="0" width="19" height="18.500" rx="1" fill="url(#wg)"/><rect x="0" y="20.500" width="19" height="18.500" rx="1" fill="url(#wg)"/><rect x="21" y="20.500" width="19" height="18.500" rx="1" fill="url(#wg)"/></svg>
<svg class="abs" style="left:819px;top:20px" width="44" height="42" viewBox="0 0 44 42"><defs><linearGradient id="sg" x1="0" y1="1" x2="1" y2="0"><stop offset="0" stop-color="#0a6ad0"/><stop offset="0.600" stop-color="#1a86e0"/><stop offset="1" stop-color="#3cc87a"/></linearGradient></defs><circle cx="19" cy="17.500" r="14" fill="rgba(255,255,255,0.35)" stroke="url(#sg)" stroke-width="4.500"/><path d="M29 28.500L38.500 38.500" stroke="#0a6ad0" stroke-width="5.500" stroke-linecap="round"/></svg>
<svg class="abs" style="left:893px;top:21px" width="44" height="42" viewBox="0 0 44 42"><path d="M4 8 L12 2 L22 5 L34 1 L41 9 L40 30 L36 40 L8 40 L3 30 Z" fill="#8a7a72"/><path d="M8 14 Q22 2 36 14 L37 30 Q22 42 7 30 Z" fill="#d9c2b0"/><path d="M5 10 Q20 0 38 10 L39 20 Q30 10 22 12 Q12 10 5 22 Z" fill="#6e625e"/><path d="M2 6 l9 -3 l-1 9z M33 2 l9 4 l-7 6z" fill="#b83a3a"/><circle cx="16" cy="25" r="2.500" fill="#4a3a3a"/><circle cx="29" cy="25" r="2.500" fill="#4a3a3a"/><path d="M10 40 L14 32 L30 32 L34 40Z" fill="#5a5256"/></svg>
<div class="abs" style="left:968px;top:21px;width:41px;height:40px;border-radius:11px;background:linear-gradient(180deg,#3a8af6,#2a6fe8)"></div>
<div class="abs b" style="left:968px;top:21px;width:41px;height:40px;line-height:40px;text-align:center;color:#fff;font-size:23px;letter-spacing:-1.500px">123</div>
<svg class="abs" style="left:1043px;top:24px" width="38" height="33" viewBox="0 0 38 33"><rect x="0.750" y="0.750" width="36.500" height="31.500" rx="2" fill="#ececf0" stroke="#b8b8c0" stroke-width="1.500"/><defs><linearGradient id="tg" x1="0" y1="0" x2="1" y2="1"><stop offset="0" stop-color="#2f7f8f"/><stop offset="1" stop-color="#5aa878"/></linearGradient></defs><rect x="4" y="5" width="18" height="22" fill="url(#tg)"/><rect x="30" y="5" width="2.500" height="9" fill="#2f8f5f"/><rect x="25" y="20" width="8" height="1.500" fill="#aaa"/></svg>
<svg class="abs" style="left:1115px;top:20px" width="42" height="42" viewBox="0 0 42 42"><rect x="0" y="0" width="42" height="42" rx="9" fill="#9a9288"/><path d="M3 9 Q20 -3 39 9 L40 26 Q36 12 21 13 Q8 12 3 30 Z" fill="#d8cfbc"/><path d="M9 16 Q21 8 33 16 L34 32 Q21 42 8 32 Z" fill="#e6d8c8"/><path d="M4 12 Q14 8 20 14 Q10 16 6 30Z M38 12 Q28 8 22 14 Q32 16 36 30Z" fill="#b8aa92"/><circle cx="16" cy="25" r="2.200" fill="#5a4a4a"/><circle cx="27" cy="25" r="2.200" fill="#5a4a4a"/><path d="M6 42 L12 34 L30 34 L36 42Z" fill="#6a625c"/></svg>
<div class="abs" style="left:1177px;top:7px;width:66px;height:67px;background:#f0b4b2;border-radius:6px"></div>
<div class="abs" style="left:1183.500px;top:67.500px;width:53px;height:6px;background:#d32222;border-radius:3px"></div>
<svg class="abs" style="left:1189px;top:21px" width="43" height="40" viewBox="0 0 43 40"><rect width="43" height="40" rx="9" fill="#12c35e"/><ellipse cx="17.500" cy="16.500" rx="10.500" ry="8.800" fill="#fff"/><path d="M11 23 l-1.500 5 l6 -3.200z" fill="#fff"/><ellipse cx="28" cy="24.500" rx="8.800" ry="7.400" fill="#fff" stroke="#12c35e" stroke-width="1.400"/><path d="M32 30.500 l2.500 3.500 l-6 -2z" fill="#fff"/><circle cx="14" cy="14.500" r="1.500" fill="#12c35e"/><circle cx="21" cy="14.500" r="1.500" fill="#12c35e"/><circle cx="25" cy="22.500" r="1.300" fill="#12c35e"/><circle cx="31" cy="22.500" r="1.300" fill="#12c35e"/></svg>
<svg class="abs" style="left:1263px;top:23px" width="42" height="38" viewBox="0 0 42 38"><path d="M0 4 Q0 1 3 1 L13 1 Q15 1 16.500 3 L19 6 L39 6 Q42 6 42 9 L42 33 Q42 36 39 36 L3 36 Q0 36 0 33Z" fill="#e8a820"/><path d="M0 10 Q0 7 3 7 L39 7 Q42 7 42 10 L42 33 Q42 36 39 36 L3 36 Q0 36 0 33Z" fill="#fcd04a"/><path d="M9 26 Q9 24 11 24 L31 24 Q33 24 33 26 L33 36 L9 36Z" fill="#1976d2"/><rect x="12" y="27.500" width="18" height="3" rx="1" fill="#0d5cb0"/></svg>
<svg class="abs" style="left:1337px;top:21px" width="41" height="40" viewBox="0 0 41 40"><rect width="41" height="40" rx="9" fill="#fafafa"/><path d="M6 30 Q4 24 10 20 L31 20 Q37 24 35 30 Q33 32 31 28 L10 28 Q8 32 6 30Z" fill="#1a1a1a"/><ellipse cx="20.500" cy="14" rx="9" ry="10" fill="#111"/><ellipse cx="20.500" cy="26" rx="10.500" ry="9.500" fill="#111"/><ellipse cx="20.500" cy="27.500" rx="7" ry="7.500" fill="#fff"/><ellipse cx="17.500" cy="11" rx="2" ry="3" fill="#fff"/><ellipse cx="23.500" cy="11" rx="2" ry="3" fill="#fff"/><ellipse cx="20.500" cy="16.500" rx="5.500" ry="2" fill="#f5b400"/><path d="M10.500 19.500 Q20.500 24 30.500 19.500 L31 23 Q20.500 28 10 23Z" fill="#e02020"/><path d="M12 22 l2.500 7 l3 -1 l-2 -6z" fill="#e02020"/><ellipse cx="14" cy="36" rx="5" ry="2.200" fill="#f5b400"/><ellipse cx="27" cy="36" rx="5" ry="2.200" fill="#f5b400"/></svg>
<div class="abs" style="left:1398.500px;top:9.500px;width:64.500px;height:64.500px;background:rgba(255,255,255,0.55);border-radius:6px"></div>
<svg class="abs" style="left:1411px;top:20px" width="39" height="42" viewBox="0 0 39 42"><path d="M17.500 2.200 Q19.500 1 21.500 2.200 L35 10 Q37 11.200 37 13.500 L37 28.500 Q37 30.800 35 32 L21.500 39.800 Q19.500 41 17.500 39.800 L4 32 Q2 30.800 2 28.500 L2 13.500 Q2 11.200 4 10Z" fill="#0f86e8"/><path d="M9.500 25 A10 10 0 0 1 19.500 15 L19.500 25Z" fill="#70dca0"/><path d="M19.500 15 A10 10 0 0 1 29.500 25 L19.500 25Z" fill="#e2e2e0"/><circle cx="15" cy="20.500" r="1.400" fill="#fff"/><circle cx="24" cy="20.500" r="1.500" fill="#8a5a36"/></svg>
<div class="abs" style="left:1418px;top:68px;width:27px;height:5px;background:#14b85a;border-radius:2.500px"></div>
<div class="abs" style="left:983.5px;top:68.500px;width:9px;height:4px;background:#8a8688;border-radius:2px"></div>
<div class="abs" style="left:1057.5px;top:68.500px;width:9px;height:4px;background:#8a8688;border-radius:2px"></div>
<div class="abs" style="left:1130.5px;top:68.500px;width:9px;height:4px;background:#8a8688;border-radius:2px"></div>
<div class="abs" style="left:1278.5px;top:68.500px;width:9px;height:4px;background:#8a8688;border-radius:2px"></div>
<div class="abs" style="left:1352.5px;top:68.500px;width:9px;height:4px;background:#8a8688;border-radius:2px"></div>
<svg class="abs" style="left:1866px;top:31px" width="24" height="18" viewBox="0 0 24 18"><path d="M3.500 13.500L12 5L20.500 13.500" stroke="#2a2a2a" stroke-width="2.200" fill="none" stroke-linecap="round" stroke-linejoin="round"/></svg>
<div class="abs" style="left:-27px;top:12px;font-size:44px;line-height:50px;color:rgba(255,255,255,0.35)">看</div>
</div>
<div class="abs" style="left:0;top:1287px;width:1896px;height:3px;background:#0a0a0a"></div>
</body>
</html>
